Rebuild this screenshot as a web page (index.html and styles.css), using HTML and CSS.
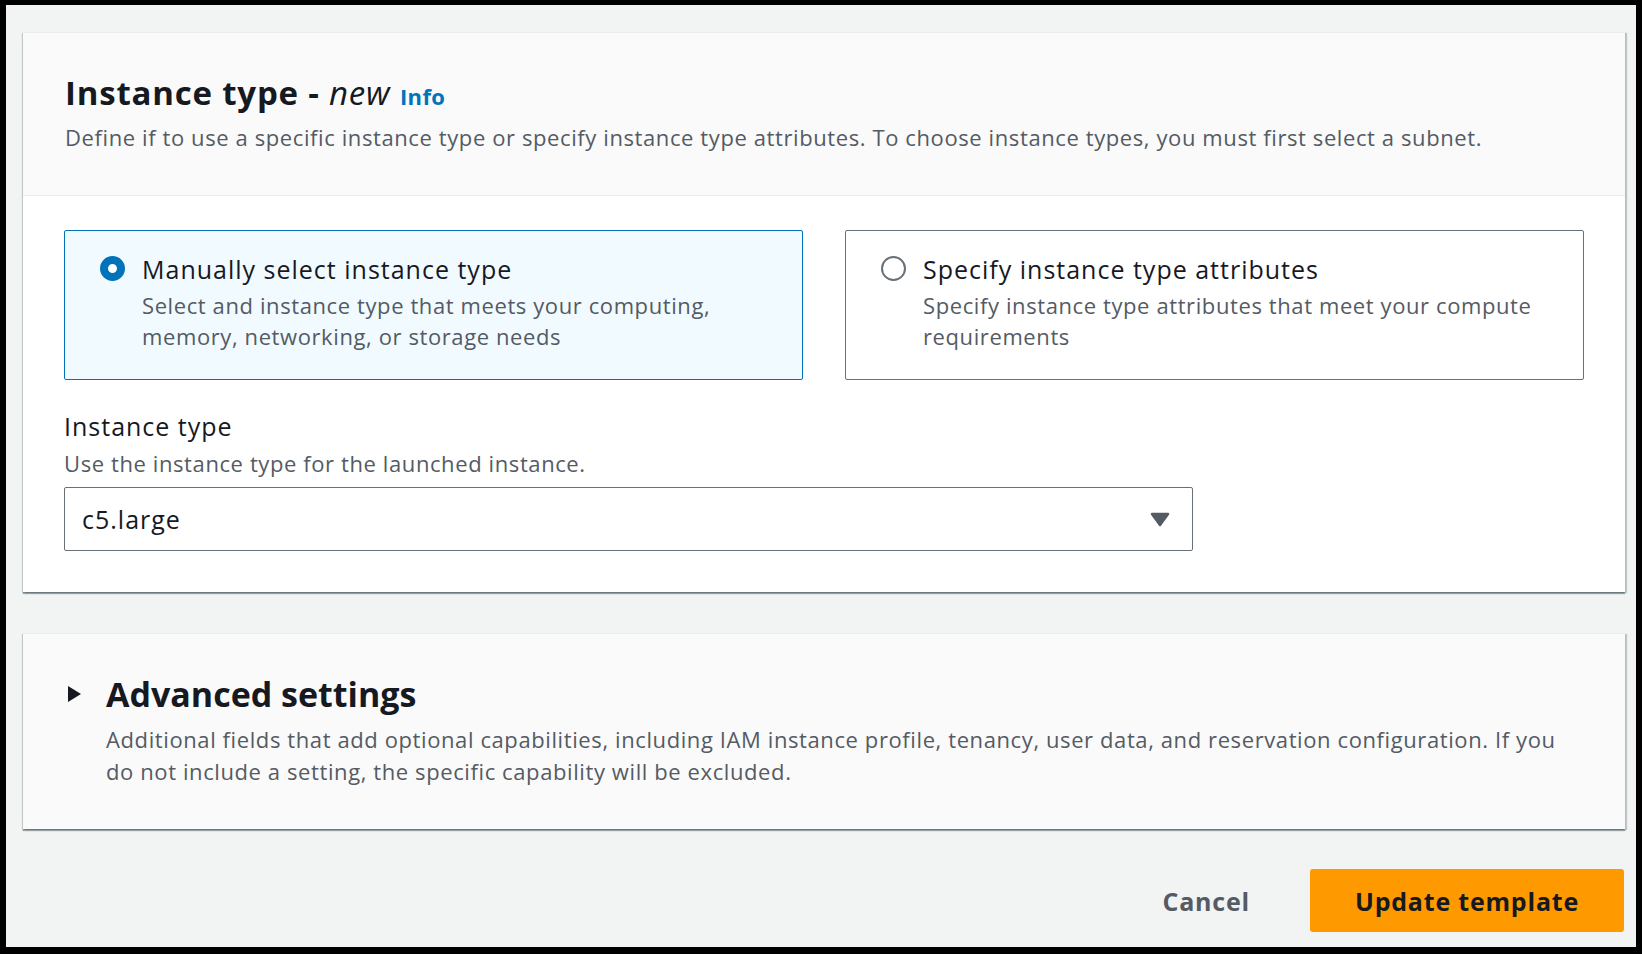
FILE: index.html
```html
<!DOCTYPE html>
<html lang="en">
<head>
<meta charset="utf-8">
<title>Instance type</title>
<link rel="stylesheet" href="styles.css">
</head>
<body>
<div class="frame">
  <section class="card">
    <header class="card-header">
      <h2 class="title">Instance type - <em>new</em> <a class="info" href="#">Info</a></h2>
      <p class="desc">Define if to use a specific instance type or specify instance type attributes. To choose instance types, you must first select a subnet.</p>
    </header>
    <div class="card-body">
      <div class="tiles">
        <div class="tile selected">
          <span class="radio on"></span>
          <div class="tile-text">
            <div class="tile-title">Manually select instance type</div>
            <div class="tile-desc">Select and instance type that meets your computing,<br>memory, networking, or storage needs</div>
          </div>
        </div>
        <div class="tile">
          <span class="radio"></span>
          <div class="tile-text">
            <div class="tile-title">Specify instance type attributes</div>
            <div class="tile-desc">Specify instance type attributes that meet your compute<br>requirements</div>
          </div>
        </div>
      </div>
      <div class="field">
        <div class="field-label">Instance type</div>
        <div class="field-desc">Use the instance type for the launched instance.</div>
        <div class="select">
          <span>c5.large</span>
          <svg class="caret" width="20" height="15" viewBox="0 0 20 15"><path d="M2 2 H18 L10 13 Z" fill="#545b64" stroke="#545b64" stroke-width="2.5" stroke-linejoin="round"/></svg>
        </div>
      </div>
    </div>
  </section>

  <section class="card expander">
    <svg class="tri" width="16" height="18" viewBox="0 0 16 18"><path d="M2 1 L15 9 L2 17 Z" fill="#16191f"/></svg>
    <div>
      <h2 class="adv-title">Advanced settings</h2>
      <p class="adv-desc">Additional fields that add optional capabilities, including IAM instance profile, tenancy, user data, and reservation configuration. If you<br>do not include a setting, the specific capability will be excluded.</p>
    </div>
  </section>

  <div class="actions">
    <button class="btn-link">Cancel</button>
    <button class="btn-primary">Update template</button>
  </div>
</div>
</body>
</html>
```
FILE: styles.css
```css
* { box-sizing: border-box; }
html, body { margin: 0; padding: 0; }
body {
  background: #000;
  font-family: "Open Sans", Lato, sans-serif;
  color: #16191f;
  width: 1642px;
  height: 954px;
  padding: 5px 6px 7px 6px;
}
.frame {
  background: #f2f3f3;
  height: 942px;
  padding: 27px 11px 0 17px;
}
.card {
  background: #fff;
  box-shadow: 0 2px 1px 0 rgba(0,28,36,.35), 2px 1px 1px 0 rgba(0,28,36,.2), -1px 1px 1px 0 rgba(0,28,36,.15);
  border-top: 1px solid #eaeded;
}
.card-header {
  background: #fafafa;
  border-bottom: 1px solid #eaeded;
  padding: 40px 41px 44px 42px;
}
.title {
  margin: 0;
  font-size: 33px;
  line-height: 40px;
  font-weight: 700;
  letter-spacing: 0.8px;
}
.title em { font-weight: 400; font-style: italic; }
.info {
  color: #0073bb;
  font-size: 22px;
  font-weight: 700;
  text-decoration: none;
  letter-spacing: 0.4px;
}
.desc {
  margin: 7px 0 0;
  font-size: 22px;
  line-height: 28px;
  letter-spacing: 0.6px;
  color: #545b64;
}
.card-body {
  padding: 34px 41px 41px 41px;
}
.tiles {
  display: flex;
  gap: 42px;
}
.tile {
  flex: 1;
  display: flex;
  align-items: flex-start;
  border: 1px solid #687078;
  border-radius: 2px;
  height: 150px;
  padding: 22px 20px 0 35px;
}
.tile.selected {
  background: #f1faff;
  border-color: #0073bb;
}
.radio {
  flex: none;
  width: 25px;
  height: 25px;
  border-radius: 50%;
  border: 2px solid #687078;
  background: #fff;
  margin-top: 3px;
  margin-right: 17px;
}
.radio.on {
  border: 8px solid #0073bb;
}
.tile-title {
  font-size: 25px;
  line-height: 32px;
  letter-spacing: 1px;
  margin-bottom: 5px;
}
.tile-desc {
  font-size: 22px;
  line-height: 31px;
  letter-spacing: 0.6px;
  color: #545b64;
}
.field { margin-top: 30px; }
.field-label {
  font-size: 25px;
  line-height: 32px;
  letter-spacing: 1px;
}
.field-desc {
  margin-top: 7px;
  font-size: 22px;
  line-height: 28px;
  letter-spacing: 0.6px;
  color: #545b64;
}
.select {
  margin-top: 10px;
  width: 1129px;
  height: 64px;
  border: 1px solid #687078;
  border-radius: 2px;
  background: #fff;
  display: flex;
  align-items: center;
  justify-content: space-between;
  padding: 0 22px 0 17px;
  font-size: 25px;
  letter-spacing: 1px;
}
.caret { display: block; }
.expander {
  margin-top: 41px;
  background: #fafafa;
  display: flex;
  align-items: flex-start;
  padding: 39px 40px 42px 43px;
}
.tri { flex: none; margin-top: 12px; margin-right: 24px; }
.adv-title {
  margin: 0;
  font-size: 34px;
  line-height: 42px;
  font-weight: 700;
  letter-spacing: 0;
}
.adv-desc {
  margin: 8px 0 0;
  font-size: 22px;
  line-height: 32px;
  letter-spacing: 0.6px;
  color: #545b64;
}
.actions {
  display: flex;
  justify-content: flex-end;
  align-items: center;
  margin-top: 40px;
  padding-right: 1px;
}
.btn-link {
  background: none;
  border: none;
  font-family: inherit;
  font-size: 25px;
  font-weight: 700;
  letter-spacing: 0.8px;
  color: #545b64;
  padding: 0;
  margin-right: 60px;
}
.btn-primary {
  background: #ff9900;
  border: none;
  border-radius: 3px;
  height: 63px;
  width: 314px;
  font-family: inherit;
  font-size: 25px;
  font-weight: 700;
  letter-spacing: 0.8px;
  color: #16191f;
  padding: 0;
}
```
